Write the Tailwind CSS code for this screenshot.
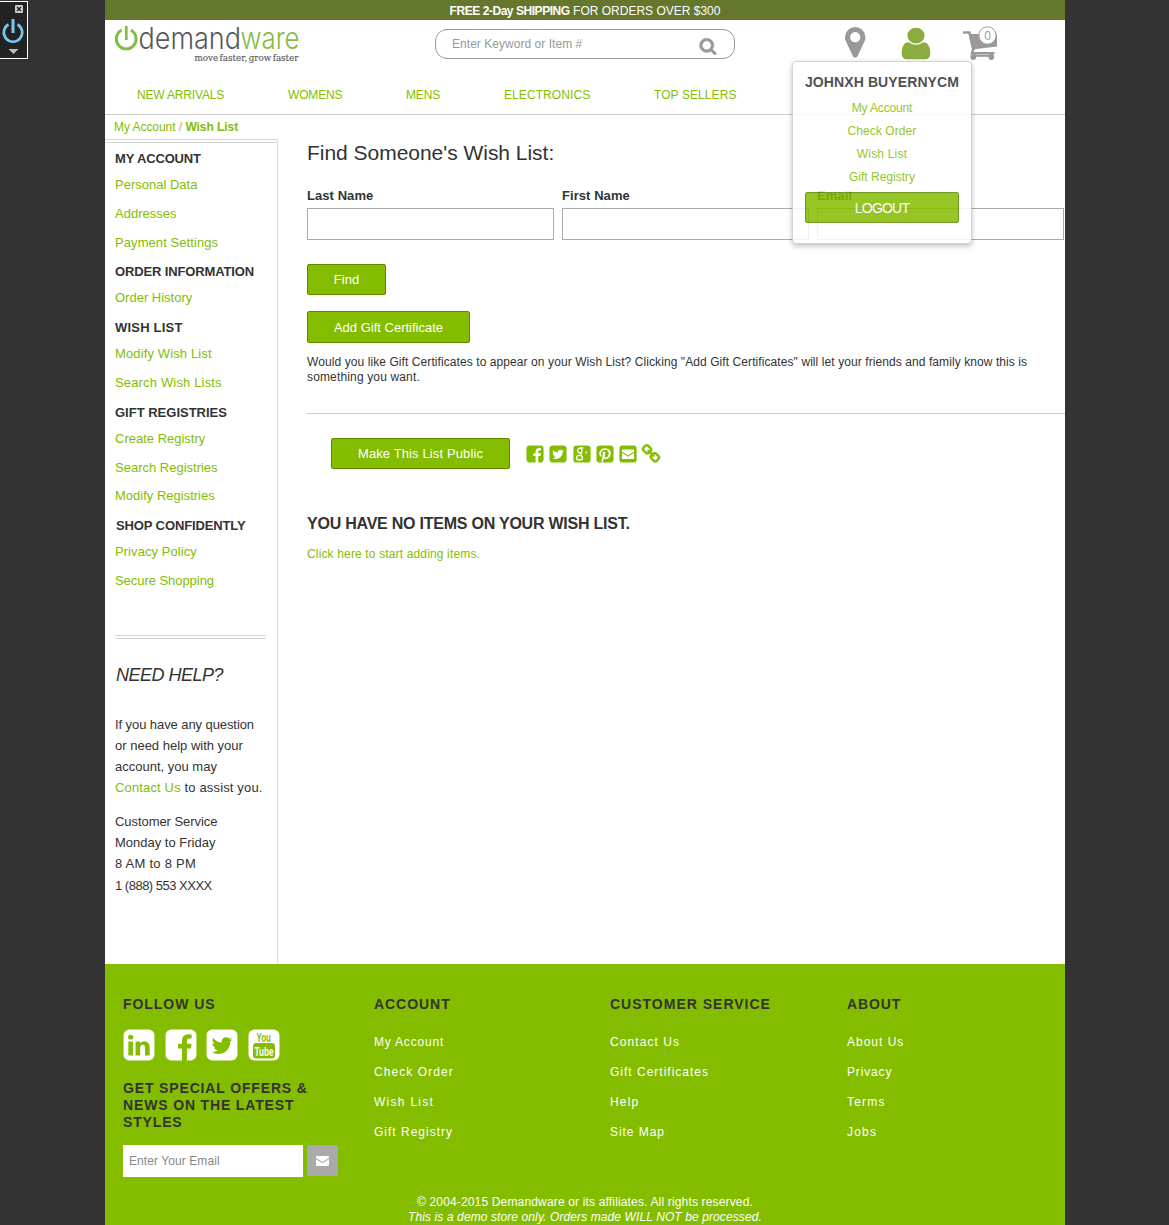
<!DOCTYPE html>
<html lang="en">
<head>
<meta charset="utf-8">
<title>Wish List</title>
<script src="https://cdn.jsdelivr.net/npm/@tailwindcss/browser@4"></script>
</head>
<body class="relative h-[1225px] overflow-hidden bg-[#333] font-['Liberation_Sans',Arial,sans-serif] text-xs text-[#333]">

<svg class="absolute" width="0" height="0" viewBox="0 0 1792 1792">
  <defs>
    <path id="fb" d="M1376 128q119 0 203.500 84.500t84.500 203.500v960q0 119-84.500 203.500t-203.500 84.500h-188v-595h199l30-232h-229v-148q0-56 23.500-84t91.500-28l122-1v-207q-63-9-178-9-136 0-217.500 80t-81.500 226v171h-200v232h200v595h-532q-119 0-203.500-84.500t-84.500-203.500v-960q0-119 84.500-203.500t203.500-84.500h960z"/>
    <path id="tw" d="M1408 610q-56 25-121 34 68-40 93-117-65 38-134 51-61-66-153-66-87 0-148.500 61.500t-61.500 148.500q0 29 5 48-129-7-242-65t-192-155q-29 50-29 106 0 114 91 175-47-1-100-26v2q0 75 50 133.500t123 72.500q-29 8-51 8-13 0-39-4 21 63 74.500 104t121.500 42q-116 90-261 90-26 0-50-3 148 94 322 94 112 0 210-35.500t168-95 120.500-137 75-162 24.500-168.500q0-18-1-27 63-45 105-109zm256-194v960q0 119-84.500 203.500t-203.500 84.500h-960q-119 0-203.500-84.500t-84.500-203.500v-960q0-119 84.500-203.500t203.500-84.500h960q119 0 203.500 84.500t84.500 203.500z"/>
    <path id="li" d="M365 1414h231v-694h-231v694zm246-908q-1-52-36-86t-93-34-94.500 34-36.500 86q0 51 35.500 85.500t92.500 34.500h1q59 0 95-34.500t36-85.500zm585 908h231v-398q0-154-73-233t-193-79q-136 0-209 117h2v-101h-231q3 66 0 694h231v-388q0-38 7-56 15-35 45-59.500t74-24.500q116 0 116 157v371zm468-998v960q0 119-84.500 203.500t-203.500 84.500h-960q-119 0-203.500-84.500t-84.500-203.500v-960q0-119 84.500-203.500t203.500-84.500h960q119 0 203.500 84.500t84.500 203.500z"/>
    <path id="pin" d="M1376 128q119 0 203.500 84.500t84.500 203.500v960q0 119-84.500 203.500t-203.500 84.500h-725q85-122 108-210 9-34 53-209 21 39 73.500 67t112.500 28q181 0 295.500-147.500t114.500-373.500q0-84-35-162.500t-96.500-139-152.500-97-197-36.500q-104 0-194.500 28.500t-153 76.500-107.500 109.500-66.500 128-21.500 132.500q0 102 39.500 180t116.500 110q13 5 23.500 0t14.500-19q10-44 15-61 6-23-11-42-50-62-50-150 0-150 103.500-256.500t270.500-106.500q149 0 232.500 81t83.500 210q0 168-67.500 286t-173.500 118q-60 0-97-43.500t-23-103.500q8-34 26.500-92.500t29.500-102 11-74.500q0-49-26.500-81.500t-75.500-32.500q-61 0-103.500 56.500t-42.500 139.500q0 72 24 121l-98 414q-24 100-7 254h-183q-119 0-203.500-84.500t-84.500-203.500v-960q0-119 84.500-203.500t203.500-84.500h960z"/>
    <path id="chain" d="M1520 1216q0-40-28-68l-208-208q-28-28-68-28-42 0-72 32 3 3 19 18.500t21.500 21.500 15 19 13 25.500 3.500 27.500q0 40-28 68t-68 28q-15 0-27.500-3.500t-25.500-13-19-15-21.500-21.500-18.500-19q-33 31-33 73 0 40 28 68l206 207q27 27 68 27 40 0 68-26l147-146q28-28 28-67zm-703-705q0-40-28-68l-206-207q-28-28-68-28-39 0-68 27l-147 146q-28 28-28 67 0 40 28 68l208 208q27 27 68 27 42 0 72-31-3-3-19-18.500t-21.500-21.500-15-19-13-25.500-3.500-27.500q0-40 28-68t68-28q15 0 27.500 3.500t25.500 13 19 15 21.500 21.500 18.500 19q33-31 33-73zm895 705q0 120-85 203l-147 146q-83 83-203 83-121 0-204-85l-206-207q-83-83-83-203 0-123 88-209l-88-88q-86 88-208 88-120 0-204-84l-208-208q-84-84-84-204t85-203l147-146q83-83 203-83 121 0 204 85l206 207q83 83 83 203 0 123-88 209l88 88q86-88 208-88 120 0 204 84l208 208q84 84 84 204z"/>
  </defs>
</svg>

<!-- Toolkit badge -->
<aside class="absolute -left-px top-px h-[58px] w-[29px] border border-white bg-[#222] shadow">
  <svg width="27" height="56" viewBox="0 0 27 56">
    <rect x="15" y="3" width="8" height="8" rx="1" fill="#ccc"/><path d="M17 5l4 4m0-4l-4 4" stroke="#222" stroke-width="1.400"/>
    <path d="M8.500 22.500A9.200 9.200 0 1 0 17.500 22.500" fill="none" stroke="#7ac6ec" stroke-width="2.600"/><path d="M13 17v14" stroke="#7ac6ec" stroke-width="3"/>
    <path d="M8.500 47h10l-5 5z" fill="#bbb"/>
  </svg>
</aside>

<div class="mx-[105px] w-[960px] bg-white">
  <div class="h-5 bg-[#64772c] pt-[3px] text-center leading-4 text-white"><b class="tracking-[-0.450px]">FREE 2-Day SHIPPING</b> FOR ORDERS OVER $300</div>

  <header class="relative h-[95px] border-b border-[#ccc]">
    <div class="flex">
      <svg class="ml-[9px] shrink-0 overflow-visible" width="190" height="47" viewBox="114 20 190 47">
        <path d="M121.600 30.200A9.900 9.900 0 1 0 130.800 30.200" fill="none" stroke="#84bd41" stroke-width="3"/><path d="M126.300 26v14" stroke="#84bd41" stroke-width="2.700"/>
        <text x="138.500" y="48.500" font-family="Inter" font-weight="300" font-size="30" textLength="102.500" lengthAdjust="spacingAndGlyphs" fill="#58595b">demand</text>
        <text x="240.500" y="48.500" font-family="Inter" font-weight="300" font-size="30" textLength="59" lengthAdjust="spacingAndGlyphs" fill="#84bd41">ware</text>
        <text x="194.500" y="61.300" font-family="DejaVu Serif" font-size="9.500" word-spacing="-1.500" textLength="104" lengthAdjust="spacingAndGlyphs" fill="#58595b" stroke="#58595b" stroke-width=".15">move faster, grow faster</text>
      </svg>
      <div class="ml-[131px] mt-[9px] flex h-[30px] w-[300px] items-center justify-between rounded-[12px] border border-[#999] pl-4 pr-[17px] tracking-[0.040px] text-[#999]">
        <span>Enter Keyword or Item #</span>
        <svg class="mt-[3px]" width="18" height="18" viewBox="0 0 1792 1792" fill="#999" stroke="#999" stroke-width="60"><path d="M1216 832q0-185-131.500-316.500t-316.500-131.500-316.500 131.500-131.500 316.500 131.500 316.500 316.500 131.500 316.500-131.500 131.500-316.500zm512 832q0 52-38 90t-90 38q-54 0-90-38l-343-342q-179 124-399 124-143 0-273.500-55.500t-225-150-150-225-55.500-273.500 55.500-273.500 150-225 225-150 273.500-55.500 273.500 55.500 225 150 150 225 55.500 273.500q0 220-124 399l343 343q37 37 37 90z"/></svg>
      </div>
      <svg class="ml-[100px] mt-1 shrink-0" width="170" height="38" viewBox="835 24 170 38" fill="#999">
        <path transform="translate(837.300 24.400) scale(.0200)" d="M1152 640q0-106-75-181t-181-75-181 75-75 181 75 181 181 75 181-75 75-181zm256 0q0 109-33 179l-364 774q-16 33-47.500 52t-67.500 19-67.500-19-46.500-52l-365-774q-33-70-33-179 0-212 150-362t362-150 362 150 150 362z"/>
        <path fill="#8aad3f" transform="translate(895.900 25) scale(.0224 .0206)" d="M1536 1399q0 109-62.500 187t-150.500 78h-854q-88 0-150.500-78t-62.500-187q0-85 8.500-160.500t31.500-152 58.500-131 94-89 134.500-34.500q131 128 313 128t313-128q76 0 134.500 34.500t94 89 58.500 131 31.500 152 8.500 160.500zm-256-887q0 159-112.500 271.500t-271.500 112.500-271.500-112.500-112.500-271.500 112.500-271.500 271.500-112.500 271.500 112.500 112.500 271.500z"/>
        <path d="M963 32.500h6.500l4 16-1.500 4.700h22.500" fill="none" stroke="#999" stroke-width="2.500"/>
        <path d="M968.500 34H997v12.500L972 49.500z"/><circle cx="973.300" cy="57" r="2.900"/><circle cx="991.300" cy="57" r="2.900"/><path d="M972 54.800h21v2h-21z"/>
        <circle cx="987.500" cy="35.500" r="8.700" fill="#fff" stroke="#999"/><text x="987.500" y="39.800" text-anchor="middle" font-size="12">0</text>
      </svg>
    </div>
    <nav class="absolute left-8 top-[67px] flex leading-4 text-[#84bd00]">
      <a class="w-[151px] tracking-[-0.170px]">NEW ARRIVALS</a><a class="w-[118px] tracking-[-0.150px]">WOMENS</a><a class="w-[98px] tracking-[-0.150px]">MENS</a><a class="w-[150px] tracking-[0.080px]">ELECTRONICS</a><a class="tracking-[0.080px]">TOP SELLERS</a>
    </nav>
    <div class="absolute left-[687px] top-[41px] z-10 h-[183px] w-[180px] rounded-[4px] border border-[#ccc] bg-white px-3 pt-[11px] text-center text-[#84bd00] opacity-85 shadow-[0_2px_5px_rgba(0,0,0,.3)]">
      <h3 class="-mx-1 whitespace-nowrap text-sm font-bold leading-[18px] tracking-[0.100px] text-[#333]">JOHNXH BUYERNYCM</h3>
      <div class="mt-[6px] flex flex-col leading-[23px]"><a class="tracking-[-0.150px]">My Account</a><a class="tracking-[0.080px]">Check Order</a><a class="tracking-[0.200px]">Wish List</a><a>Gift Registry</a></div>
      <button class="mt-[3px] block h-[31px] w-[154px] rounded-[2px] border border-[#5f8800] bg-[#84bd00] text-sm tracking-[-0.800px] text-white">LOGOUT</button>
    </div>
  </header>

  <div class="flex h-[849px]">
    <aside class="w-[173px] shrink-0">
      <div class="h-6 whitespace-nowrap pl-[9px] pt-1 leading-4 tracking-[-0.050px] text-[#84bd00]">My Account <span class="text-[#aaa]">/</span> <b>Wish List</b></div>
      <div class="h-[825px] border-r border-[#ddd] text-[13px]">
        <div class="border-t-4 border-double border-[#d6d6d6]"></div>
        <div class="pl-[10px] pt-px leading-[28.800px] text-[#84bd00] [&>a]:block [&>h3]:h-[27px] [&>h3]:pt-[3px] [&>h3]:font-bold [&>h3]:leading-6 [&>h3]:text-[#333]">
          <h3 class="tracking-[-0.150px]">MY ACCOUNT</h3><a>Personal Data</a><a>Addresses</a><a class="tracking-[0.080px]">Payment Settings</a>
          <h3 class="tracking-[-0.140px]">ORDER INFORMATION</h3><a>Order History</a>
          <h3 class="tracking-[0.200px]">WISH LIST</h3><a class="tracking-[0.130px]">Modify Wish List</a><a class="tracking-[0.160px]">Search Wish Lists</a>
          <h3>GIFT REGISTRIES</h3><a>Create Registry</a><a>Search Registries</a><a>Modify Registries</a>
          <h3 class="pl-px tracking-[-0.120px]">SHOP CONFIDENTLY</h3><a class="tracking-[0.060px]">Privacy Policy</a><a class="tracking-[-0.050px]">Secure Shopping</a>
        </div>
        <div class="ml-[10px] mt-[39px] w-[151px] whitespace-nowrap border-t-4 border-double border-[#d6d6d6]">
          <h2 class="pl-px pt-[24px] text-lg italic leading-6 tracking-[-0.500px]">NEED HELP?</h2>
          <p class="mt-[27px] leading-[21px]"><span class="tracking-[-0.080px]">If you have any question</span><br>or need help with your<br>account, you may<br><span class="tracking-[0.150px]"><a class="text-[#84bd00]">Contact Us</a> to assist you.</span></p>
          <p class="mt-[13px] leading-[21.300px]"><span class="tracking-[-0.060px]">Customer Service</span><br>Monday to Friday<br><span class="tracking-[0.250px]">8 AM to 8 PM</span><br><span class="tracking-[-0.500px]">1 (888) 553 XXXX</span></p>
        </div>
      </div>
    </aside>

    <main class="ml-[29px] w-[758px]">
      <h1 class="mt-[25px] text-[21px] leading-[26px] tracking-[-0.030px]">Find Someone's Wish List:</h1>
      <div class="mt-[20px] flex gap-2 text-[13px] font-bold leading-[20px] tracking-[0.060px]">
        <label class="block w-[247px]">Last Name<span class="mt-[2px] block h-8 border border-[#aaa]"></span></label>
        <label class="block w-[247px]">First Name<span class="mt-[2px] block h-8 border border-[#aaa]"></span></label>
        <label class="block w-[247px]">Email<span class="mt-[2px] block h-8 border border-[#aaa]"></span></label>
      </div>
      <button class="mt-6 block h-[31px] w-[79px] rounded-[2px] border border-[#5f8800] bg-[#84bd00] text-[13px] text-white">Find</button>
      <button class="mt-4 block h-8 w-[163px] rounded-[2px] border border-[#5f8800] bg-[#84bd00] pt-px text-[13px] text-white">Add Gift Certificate</button>
      <p class="mt-[12px] whitespace-nowrap leading-[15px] tracking-[0.083px]">Would you like Gift Certificates to appear on your Wish List? Clicking "Add Gift Certificates" will let your friends and family know this is<br><span class="tracking-[0.150px]">something you want.</span></p>
      <div class="mt-[28px] flex border-t border-[#ccc] pl-6 pt-6">
        <button class="block h-[31px] w-[179px] rounded-[2px] border border-[#5f8800] bg-[#84bd00] text-[13px] tracking-[0.120px] text-white">Make This List Public</button>
        <div class="ml-[15px] mt-[6px] flex gap-[3px] text-[#84bd00]">
          <svg width="20" height="20" viewBox="0 0 1792 1792" fill="currentColor"><use href="#fb"/></svg>
          <svg width="20" height="20" viewBox="0 0 1792 1792" fill="currentColor"><use href="#tw"/></svg>
          <svg class="ml-px" width="20" height="20" viewBox="0 0 20 20"><rect x="1.400" y="1.400" width="17.200" height="17.200" rx="3.200" fill="currentColor"/><g fill="none" stroke="#fff" stroke-width="1.300"><ellipse cx="7.800" cy="6.600" rx="2.100" ry="2.500"/><path d="M8.300 4h3M8.600 9.200l1.400 2"/><ellipse cx="7.500" cy="13.700" rx="3" ry="2.300"/><path d="M14.200 6.500v4M13 8.500h2.400" stroke-width=".6"/></g></svg>
          <svg width="20" height="20" viewBox="0 0 1792 1792" fill="currentColor"><use href="#pin"/></svg>
          <svg width="20" height="20" viewBox="0 0 20 20"><rect x="1.400" y="1.400" width="17.200" height="17.200" rx="3.200" fill="currentColor"/><path d="M4 5.500h12v2l-6 4-6-4zM4 8.800l6 4 6-4v6.200H4z" fill="#fff"/></svg>
          <svg width="20" height="20" viewBox="0 0 1792 1792" fill="currentColor" stroke="currentColor" stroke-width="40"><use href="#chain"/></svg>
        </div>
      </div>
      <h2 class="mt-[45px] text-base font-bold leading-5 tracking-[-0.230px]">YOU HAVE NO ITEMS ON YOUR WISH LIST.</h2>
      <a class="mt-3 block leading-4 tracking-[0.150px] text-[#84bd00]">Click here to start adding items.</a>
    </main>
  </div>

  <footer class="h-[261px] bg-[#84bd00] px-[18px] pt-[31px] text-white">
    <div class="flex h-[200px] tracking-[1px] [&_h3]:text-sm [&_h3]:font-bold [&_h3]:leading-[18px] [&_h3]:text-[#333]">
      <section class="w-[251px]">
        <h3 class="tracking-[0.950px]">FOLLOW US</h3>
        <div class="-ml-[2px] mt-[14px] flex gap-[5.700px]">
          <svg width="36" height="36" viewBox="0 0 1792 1792" fill="#fff"><use href="#li"/></svg>
          <svg width="36" height="36" viewBox="0 0 1792 1792" fill="#fff"><use href="#fb"/></svg>
          <svg width="36" height="36" viewBox="0 0 1792 1792" fill="#fff"><use href="#tw"/></svg>
          <svg class="tracking-normal" width="36" height="36" viewBox="0 0 36 36" font-family="Liberation Sans" font-weight="bold"><rect x="2.500" y="2.500" width="31" height="31" rx="6" fill="#fff"/><rect x="7" y="16" width="22" height="15.500" rx="3.500" fill="#84bd00"/><text x="10.500" y="14.500" textLength="14.500" font-size="12.500" lengthAdjust="spacingAndGlyphs" fill="#84bd00">You</text><text x="8.500" y="28.500" font-size="12.500" textLength="19" lengthAdjust="spacingAndGlyphs" fill="#fff">Tube</text></svg>
        </div>
        <h3 class="mt-[17px] leading-[17px]! whitespace-nowrap tracking-[0.850px]">GET SPECIAL OFFERS &amp;<br>NEWS ON THE LATEST<br>STYLES</h3>
        <div class="mt-[14px] flex gap-1"><div class="h-8 w-[180px] bg-white pl-1.5 leading-8 tracking-[0.080px] text-[#888]">Enter Your Email</div>
          <div class="flex h-[31px] w-[31px] items-center justify-center rounded-[2px] bg-[#aaa]"><svg width="13" height="10" viewBox="0 0 13 10" fill="#fff"><path d="M0 1q0-1 1-1h11q1 0 1 1v1L6.500 6 0 2zM0 3.200l6.500 4L13 3.200V9q0 1-1 1H1q-1 0-1-1z"/></svg></div></div>
      </section>
      <section class="flex w-[236px] flex-col"><h3 class="tracking-[0.950px]">ACCOUNT</h3><div class="mt-[14px] flex flex-col leading-[30px]"><a class="tracking-[0.800px]">My Account</a><a class="tracking-[1.080px]">Check Order</a><a class="tracking-[1.280px]">Wish List</a><a>Gift Registry</a></div></section>
      <section class="flex w-[237px] flex-col"><h3 class="tracking-[1px]">CUSTOMER SERVICE</h3><div class="mt-[14px] flex flex-col leading-[30px]"><a class="tracking-[1.080px]">Contact Us</a><a>Gift Certificates</a><a class="tracking-[1.200px]">Help</a><a class="tracking-[0.950px]">Site Map</a></div></section>
      <section class="flex flex-col"><h3 class="tracking-[0.900px]">ABOUT</h3><div class="mt-[14px] flex flex-col leading-[30px]"><a>About Us</a><a class="tracking-[0.850px]">Privacy</a><a class="tracking-[1.200px]">Terms</a><a class="tracking-[1.200px]">Jobs</a></div></section>
    </div>
    <p class="text-center leading-[15px]"><span class="tracking-[0.160px]">© 2004-2015 Demandware or its affiliates. All rights reserved.</span><br><i class="tracking-[0.100px]">This is a demo store only. Orders made WILL NOT be processed.</i></p>
  </footer>
</div>
</body>
</html>
